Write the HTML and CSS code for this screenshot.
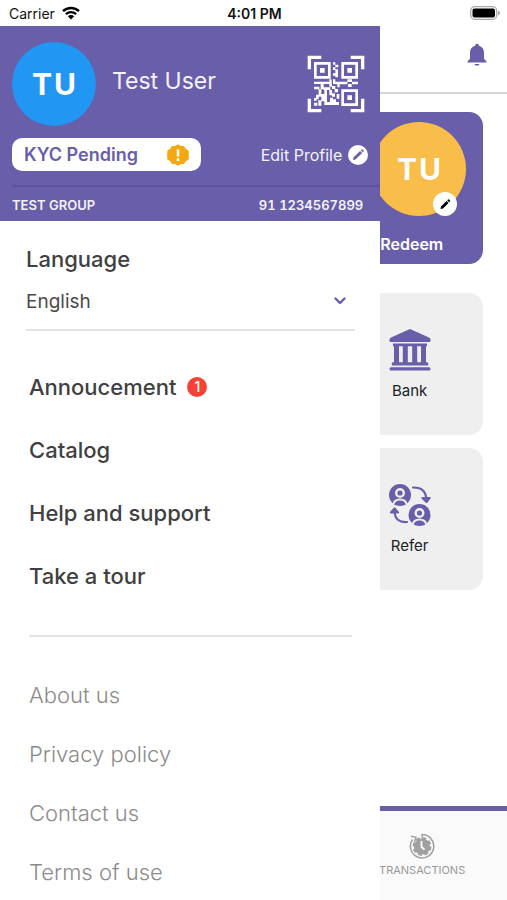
FILE: index.html
```html
<!DOCTYPE html>
<html lang="en">
<head>
<meta charset="utf-8">
<meta name="viewport" content="width=device-width, initial-scale=1">
<title>Menu</title>
<link rel="stylesheet" href="styles.css">
</head>
<body>
<div class="status">
  <span class="carrier">Carrier
    <svg width="18" height="14" viewBox="0 0 18 14" fill="none" stroke="#000" stroke-width="2.4"><path d="M1 5.2a11.500 11.500 0 0 1 16 0M3.900 8.200a7.400 7.400 0 0 1 10.200 0"/><path d="M9 13.500L5.800 10.300a4.600 4.600 0 0 1 6.400 0z" fill="#000" stroke="none"/></svg>
  </span>
  <span class="time">4:01 PM</span>
  <svg class="battery" width="30" height="14" viewBox="0 0 30 14"><rect x=".7" y=".7" width="26" height="12.600" rx="4" fill="#fff" stroke="#a9a9a9" stroke-width="1.300"/><rect x="2.500" y="2.500" width="22.500" height="9" rx="2" fill="#000"/><path d="M28 4.500q2 .8 2 2.500t-2 2.500z" fill="#a9a9a9"/></svg>
</div>
<div class="screen">
  <aside class="drawer">
    <header class="profile">
      <div class="who">
        <span class="avatar">TU</span>
        <span class="name">Test User</span>
        <button class="plain qr" aria-label="Show QR code">
          <svg width="58" height="58" viewBox="21 21 174 174" fill="none" stroke="#fff">
            <path stroke-width="10" d="M28 64V28h36M152 28h36v36M188 152v36h-36M64 188H28v-36"/>
            <path stroke-width="8" d="M46 46h42v42H46zM128 46h42v42h-42zM128 128h42v42h-42z"/>
            <path fill="#fff" stroke="none" d="M60 60h14v14H60zM142 60h14v14h-14zM142 142h14v14h-14zM99 43h7v7h-7zM106 50h9v8h-9zM99 58h7v8h-7zM106 64h8v24h-8zM99 76h8v7h-8zM42 101h46v7H42zM88 94h7v14h-7zM99 94h7v14h-7zM106 101h36v8h-36zM142 94h14v8h-14zM156 101h18v8h-18zM144 108h11v9h-11zM42 116h16v8H42zM62 108h9v16h-9zM71 118h20v8H71zM88 108h8v8h-8zM96 114h10v9h-10zM112 108h7v10h-7zM56 124h8v22h-8zM48 140h8v14h-8zM42 150h8v8h-8zM64 138h10v22H64zM73 126h8v36h-8zM88 126h8v16h-8zM96 136h9v10h-9zM104 123h10v10h-10zM110 138h8v14h-8zM90 149h9v16h-9zM98 154h10v8h-10zM73 162h44v9H73zM42 164h10v9H42zM55 157h9v16h-9z"/>
          </svg>
        </button>
      </div>
      <div class="actions">
        <button class="kyc">KYC Pending
          <svg width="22" height="22" viewBox="0 0 24 24"><path fill="#f3a90f" stroke="#f3a90f" stroke-width="2" stroke-linejoin="round" d="M12 1.500l2.800 1.600 3.300.1 1.700 2.800 2.800 1.700.1 3.300L23 12l-.3 1-.1 3.300-2.800 1.700-1.700 2.800-3.300.1L12 22.500l-2.800-1.600-3.300-.1L4.200 18l-2.800-1.700-.1-3.300L1 12l.3-1 .1-3.300L4.200 6l1.700-2.800 3.300-.1z"/><path d="M12 6v7.500M12 15.500v3" stroke="#fff" stroke-width="2.800"/></svg>
        </button>
        <button class="plain edit">Edit Profile
          <svg width="20" height="20" viewBox="0 0 20 20"><circle cx="10" cy="10" r="10" fill="#fff"/><path fill="#685eaa" d="M5 15l.5-2.500 6.600-6.600 2 2L7.500 14.500zM12.800 5.200l.8-.8q.5-.4 1 0l1 1q.4.500 0 1l-.8.8z"/></svg>
        </button>
      </div>
      <div class="group"><span>TEST GROUP</span><span>91 1234567899</span></div>
    </header>
    <div class="language">
      <label for="lang">Language</label>
      <div class="field">
        <select id="lang"><option>English</option></select>
        <svg width="12" height="8" viewBox="0 0 12 8" fill="none" stroke="#685eaa" stroke-width="2.400" stroke-linecap="round" stroke-linejoin="round"><path d="M1.500 1.500L6 6l4.500-4.500"/></svg>
      </div>
    </div>
    <nav class="menu main">
      <a href="#">Annoucement <span class="badge">1</span></a>
      <a href="#">Catalog</a>
      <a href="#">Help and support</a>
      <a href="#">Take a tour</a>
    </nav>
    <nav class="menu more">
      <a href="#">About us</a>
      <a href="#">Privacy policy</a>
      <a href="#">Contact us</a>
      <a href="#">Terms of use</a>
    </nav>
  </aside>
  <main class="home">
    <div class="topbar">
      <button class="plain" aria-label="Notifications">
        <svg width="20" height="24" viewBox="0 0 20 24" fill="#685eaa"><path d="M10 .8c1.200 0 1.900.8 1.900 1.900 3.300.8 5.100 3.500 5.100 7v6.100l2.500 2.600v1H.5v-1L3 15.800V9.700c0-3.500 1.800-6.200 5.100-7C8.100 1.600 8.800.8 10 .8zM7.500 21h5c-.3 1.200-1.200 1.700-2.500 1.700S7.800 22.200 7.500 21z"/></svg>
      </button>
    </div>
    <div class="cards">
      <section class="redeem">
        <div class="photo">
          <span class="avatar gold">TU</span>
          <button class="plain pen" aria-label="Change photo">
            <svg width="24" height="24" viewBox="0 0 24 24"><circle cx="12" cy="12" r="12" fill="#fff"/><path fill="#000" d="M7.500 17l.5-2.500 5.600-5.600 2 2L10 16.500zM14.200 8.300l.8-.8q.5-.4 1 0l1 1q.4.500 0 1l-.8.800z"/></svg>
          </button>
        </div>
        <a href="#">Redeem</a>
      </section>
      <a class="tile" href="#">
        <svg width="42" height="42" viewBox="0 0 42 42" fill="#685eaa"><path d="M21 0L40 8.500q1.500.8 1.500 2V12q0 1-1 1h-39q-1 0-1-1v-1.500Q.5 9.300 2 8.500zM4 14.500h34v2.700H4zM5 17h5v17H5zM13.800 17h5v17h-5zM23.200 17h5v17h-5zM32 17h5v17h-5zM4 33.300h34q1.200 0 1.200 1.200v2H2.800v-2q0-1.200 1.200-1.200zM2 38.300h38q1.500 0 1.500 1.600T40 41.500H2Q.5 41.500.5 39.900T2 38.300z"/></svg>
        Bank
      </a>
      <a class="tile" href="#">
        <svg width="42" height="42" viewBox="0 0 42 42"><g id="person"><circle cx="11" cy="11" r="11" fill="#685eaa"/><circle cx="11" cy="9" r="3.800" fill="#685eaa" stroke="#efefef" stroke-width="2.400"/><path fill="#685eaa" stroke="#efefef" stroke-width="2" d="M4.200 21q.8-5.500 6.800-5.500t6.800 5.500"/></g><use href="#person" x="19.500" y="20"/><path fill="none" stroke="#685eaa" stroke-width="2.200" stroke-linecap="round" stroke-linejoin="round" d="M24 3.500q12.500-.5 13.500 12M33.500 14l4 4 3-4zM18 38Q6 39 5.500 27M2 28.500l3.500-4 3.500 4z"/></svg>
        Refer
      </a>
    </div>
    <a class="tab" href="#">
      <svg width="26" height="26" viewBox="0 0 26 26"><circle cx="13" cy="13.500" r="8" fill="#a0a0a0"/><circle cx="13" cy="13.500" r="8.300" fill="none" stroke="#a0a0a0" stroke-width="2.400" stroke-dasharray="4 2.520"/><path fill="none" stroke="#a0a0a0" stroke-width="1.500" d="M13 1.500a11.700 11.700 0 1 1-9.500 5M13 .8v4M1.800 3.300L7 4.300 5.500 9"/><path fill="none" stroke="#fff" stroke-width="1.800" d="M12.500 8v6l3 2.500"/></svg>
      TRANSACTIONS
    </a>
  </main>
</div>
</body>
</html>
```
FILE: styles.css
```css
* { box-sizing: border-box; }
body {
  margin: 0;
  height: 100vh;
  overflow: hidden;
  display: flex;
  flex-direction: column;
  font-family: Inter, "Liberation Sans", sans-serif;
  color: #404042;
  background: #fff;
}
a { color: inherit; text-decoration: none; }
svg { display: block; flex: none; }
button { font-family: inherit; border: 0; cursor: pointer; }
.plain { padding: 0; background: none; color: inherit; }

.status {
  flex: none;
  display: grid;
  grid-template-columns: 1fr auto 1fr;
  align-items: center;
  height: 26px;
  padding: 0 7px 0 9px;
  color: #111;
  font-size: 14px;
}
.carrier { display: flex; align-items: center; gap: 7px; }
.time { font-weight: 600; }
.battery { justify-self: end; }

.screen { flex: 1; min-height: 0; display: grid; grid-template-columns: 3fr 1fr; }
.drawer { min-width: 0; overflow: hidden; }

.profile { background: #685eaa; color: #f4f2fb; }
.who { display: flex; align-items: center; padding: 16px 15px 0 12px; }
.avatar {
  flex: none;
  display: grid;
  place-items: center;
  width: 84px;
  height: 84px;
  padding-left: 2px;
  border-radius: 50%;
  background: #2196f3;
  color: #fff;
  font-size: 30px;
  font-weight: 700;
  letter-spacing: 2px;
}
.name { flex: 1; padding: 0 0 6px 16px; font-size: 23px; }
.actions { display: flex; justify-content: space-between; align-items: center; padding: 12px 12px 14px; }
.kyc {
  display: flex;
  justify-content: space-between;
  align-items: center;
  width: 189px;
  height: 33px;
  padding: 0 12px;
  border-radius: 10px;
  background: #fff;
  color: #685eaa;
  font-size: 18px;
  font-weight: 600;
}
.edit { display: flex; align-items: center; gap: 6px; font-size: 16px; }
.group {
  display: flex;
  justify-content: space-between;
  align-items: center;
  height: 36px;
  margin-left: 12px;
  padding: 2px 17px 0 0;
  border-top: 2px solid #5d539c;
  font-size: 13px;
  font-weight: 600;
  font-variant-numeric: tabular-nums;
}

.language { margin: 24px 25px 0 26px; border-bottom: 2px solid #e3e3e3; }
.language label { display: block; font-size: 22px; line-height: 28px; font-weight: 500; }
.field { display: flex; align-items: center; height: 56px; padding-right: 9px; }
.field select {
  flex: 1;
  appearance: none;
  padding: 0;
  border: 0;
  background: none;
  color: #4a4a4c;
  font-family: inherit;
  font-size: 19px;
}

.menu { display: flex; flex-direction: column; margin: 0 28px 0 29px; font-size: 22px; line-height: 28px; }
.main { gap: 35px; padding: 42px 0 45px; font-weight: 500; border-bottom: 2px solid #e3e3e3; }
.more { gap: 31px; padding-top: 44px; font-weight: 300; color: #8b8b8b; }
.menu a { display: flex; align-items: center; gap: 11px; }
.badge {
  width: 20px;
  height: 20px;
  border-radius: 50%;
  background: #f44336;
  color: #fff;
  font-size: 14px;
  line-height: 20px;
  text-align: center;
}

.home { min-width: 0; overflow: hidden; display: flex; flex-direction: column; }
.topbar { display: flex; justify-content: flex-end; padding: 17px 20px 25px; border-bottom: 2px solid #d4d4d4; }
.cards { flex: 1; display: flex; flex-direction: column; padding: 18px 24px 0 0; }
.redeem {
  display: flex;
  flex-direction: column;
  height: 152px;
  margin-bottom: 29px;
  padding-top: 10px;
  overflow: hidden;
  border-radius: 0 14px 14px 0;
  background: #685eaa;
  color: #fff;
  font-size: 16px;
  font-weight: 600;
}
.photo { position: relative; align-self: flex-end; margin: 0 17px 18px 0; }
.gold { width: 94px; height: 94px; background: #f9bd4a; }
.pen { position: absolute; right: 9px; bottom: 0; }
.tile {
  display: flex;
  flex-direction: column;
  align-items: center;
  gap: 10px;
  height: 142px;
  margin-bottom: 13px;
  padding: 36px 44px 0 0;
  border-radius: 0 14px 14px 0;
  background: #efefef;
  color: #222;
  font-size: 15px;
}
.tab {
  display: flex;
  flex-direction: column;
  align-items: center;
  gap: 4px;
  height: 94px;
  padding: 22px 43px 0 0;
  border-top: 5px solid #685eaa;
  background: #fafafa;
  color: #999;
  font-size: 11px;
}
```
